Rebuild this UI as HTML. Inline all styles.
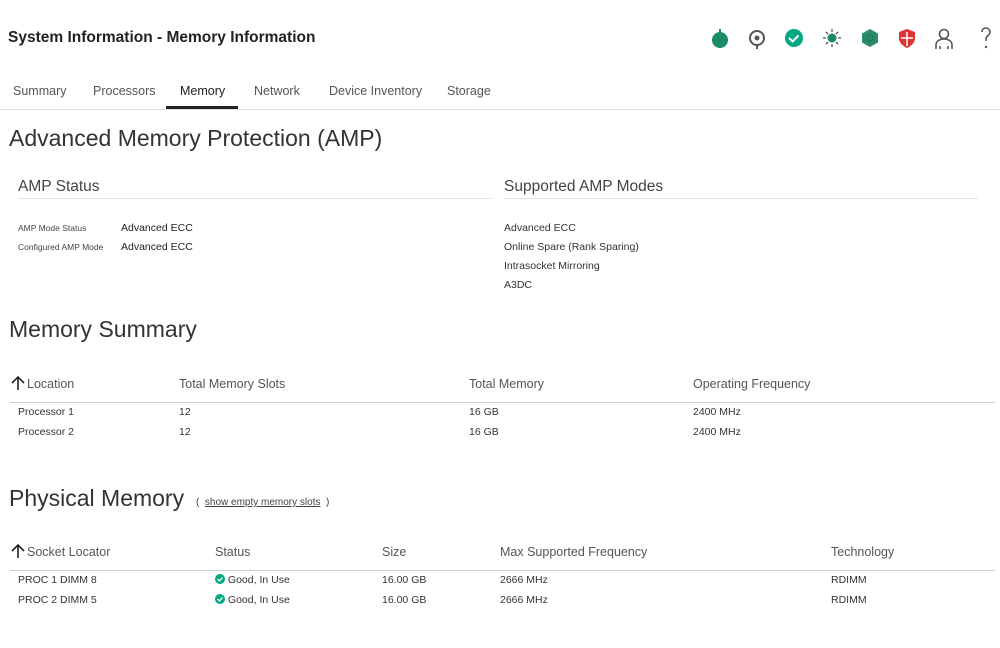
<!DOCTYPE html><html><head><style>
body{margin:0;width:1000px;height:648px;background:#fff;font-family:"Liberation Sans",sans-serif;color:#222;position:relative;overflow:hidden}
.a{position:absolute;white-space:nowrap}
.t{font-size:10.5px;color:#333}
.h{font-size:12.5px;color:#555}
.big{font-size:23px;color:#333}
.line{position:absolute;height:1px;background:#ccc}
</style></head><body>
<div class="a" style="left:8px;top:29px;font-size:15.5px;font-weight:bold;color:#222">System Information - Memory Information</div>
<svg class="a" style="left:708px;top:26px" width="290" height="26" viewBox="0 0 290 26">
<circle cx="12" cy="14" r="8" fill="#1a8a6a"/><rect x="11" y="3" width="2" height="8" fill="#1a8a6a"/>
<circle cx="49" cy="12" r="7" fill="none" stroke="#555" stroke-width="2"/><circle cx="49" cy="12" r="2.5" fill="#555"/><rect x="48" y="19" width="2" height="4" fill="#555"/>
<circle cx="86" cy="12" r="9" fill="#01a982"/><path d="M81 12l3.5 3.5 6-6" stroke="#fff" stroke-width="2" fill="none"/>
<circle cx="124" cy="12" r="4.5" fill="#1a8a6a"/><path d="M124 3v3M124 18v3M115 12h3M130 12h3M118 6l2 2M128 16l2 2M130 6l-2 2M118 18l2-2" stroke="#555" stroke-width="1.3"/>
<path d="M162 3l8 4.5v9l-8 4.5-8-4.5v-9z" fill="#2a8a6a"/><circle cx="162" cy="12" r="3" fill="none" stroke="#1a7a5a"/>
<path d="M199 3l8 3v6c0 5-4 8-8 10-4-2-8-5-8-10v-6z" fill="#d33"/><path d="M199 6v14M193 12h12" stroke="#fff" stroke-width="1.5"/>
<circle cx="236" cy="8" r="4.5" fill="none" stroke="#555" stroke-width="1.6"/><path d="M228 23v-4c0-4 4-6 8-6s8 2 8 6v4M232 23v-3M240 23v-3" fill="none" stroke="#555" stroke-width="1.6"/>
<path d="M274 6c0-3 2-4 4-4s4 1.5 4 4c0 3-4 4-4 7v2" fill="none" stroke="#555" stroke-width="1.6"/><circle cx="278" cy="21" r="1.2" fill="#555"/>
</svg>
<div class="a h" style="left:13px;top:84px">Summary</div>
<div class="a h" style="left:93px;top:84px">Processors</div>
<div class="a h" style="left:180px;top:84px;color:#222">Memory</div>
<div class="a h" style="left:254px;top:84px">Network</div>
<div class="a h" style="left:329px;top:84px">Device Inventory</div>
<div class="a h" style="left:447px;top:84px">Storage</div>
<div class="line" style="left:0;top:109px;width:1000px;background:#ddd"></div>
<div class="a" style="left:166px;top:106px;width:72px;height:3px;background:#222"></div>
<div class="a big" style="left:9px;top:125px">Advanced Memory Protection (AMP)</div>
<div class="a" style="left:18px;top:178px;font-size:15.5px;color:#444">AMP Status</div>
<div class="a" style="left:504px;top:178px;font-size:15.5px;color:#444">Supported AMP Modes</div>
<div class="line" style="left:18px;top:198px;width:474px;background:#e4e4e4"></div>
<div class="line" style="left:504px;top:198px;width:474px;background:#e4e4e4"></div>
<div class="a" style="left:18px;top:223px;font-size:8.5px;color:#444">AMP Mode Status</div>
<div class="a" style="left:18px;top:242px;font-size:8.5px;color:#444">Configured AMP Mode</div>
<div class="a t" style="left:121px;top:222px;color:#222">Advanced ECC</div>
<div class="a t" style="left:121px;top:241px;color:#222">Advanced ECC</div>
<div class="a t" style="left:504px;top:222px">Advanced ECC</div>
<div class="a t" style="left:504px;top:241px">Online Spare (Rank Sparing)</div>
<div class="a t" style="left:504px;top:260px">Intrasocket Mirroring</div>
<div class="a t" style="left:504px;top:279px">A3DC</div>
<div class="a big" style="left:9px;top:316px">Memory Summary</div>
<svg class="a" style="left:10px;top:375px" width="16" height="16"><path d="M8 15V2M2 8l6-6 6 6" stroke="#222" stroke-width="1.6" fill="none"/></svg>
<div class="a h" style="left:27px;top:377px">Location</div>
<div class="a h" style="left:179px;top:377px">Total Memory Slots</div>
<div class="a h" style="left:469px;top:377px">Total Memory</div>
<div class="a h" style="left:693px;top:377px">Operating Frequency</div>
<div class="line" style="left:10px;top:402px;width:985px"></div>
<div class="a t" style="left:18px;top:406px">Processor 1</div><div class="a t" style="left:179px;top:406px">12</div><div class="a t" style="left:469px;top:406px">16 GB</div><div class="a t" style="left:693px;top:406px">2400 MHz</div>
<div class="a t" style="left:18px;top:426px">Processor 2</div><div class="a t" style="left:179px;top:426px">12</div><div class="a t" style="left:469px;top:426px">16 GB</div><div class="a t" style="left:693px;top:426px">2400 MHz</div>
<div class="a big" style="left:9px;top:485px">Physical Memory</div>
<div class="a" style="left:196px;top:497px;font-size:10px;color:#444">( &nbsp;<u>show empty memory slots</u> &nbsp;)</div>
<svg class="a" style="left:10px;top:543px" width="16" height="16"><path d="M8 15V2M2 8l6-6 6 6" stroke="#222" stroke-width="1.6" fill="none"/></svg>
<div class="a h" style="left:27px;top:545px">Socket Locator</div>
<div class="a h" style="left:215px;top:545px">Status</div>
<div class="a h" style="left:382px;top:545px">Size</div>
<div class="a h" style="left:500px;top:545px">Max Supported Frequency</div>
<div class="a h" style="left:831px;top:545px">Technology</div>
<div class="line" style="left:10px;top:570px;width:985px"></div>
<div class="a t" style="left:18px;top:574px">PROC 1 DIMM 8</div><div class="a t" style="left:215px;top:574px"><svg width="10" height="10" style="vertical-align:-1px"><circle cx="5" cy="5" r="5" fill="#01a982"/><path d="M2.5 5l2 2 3-3.5" stroke="#fff" stroke-width="1.3" fill="none"/></svg> Good, In Use</div><div class="a t" style="left:382px;top:574px">16.00 GB</div><div class="a t" style="left:500px;top:574px">2666 MHz</div><div class="a t" style="left:831px;top:574px">RDIMM</div>
<div class="a t" style="left:18px;top:594px">PROC 2 DIMM 5</div><div class="a t" style="left:215px;top:594px"><svg width="10" height="10" style="vertical-align:-1px"><circle cx="5" cy="5" r="5" fill="#01a982"/><path d="M2.5 5l2 2 3-3.5" stroke="#fff" stroke-width="1.3" fill="none"/></svg> Good, In Use</div><div class="a t" style="left:382px;top:594px">16.00 GB</div><div class="a t" style="left:500px;top:594px">2666 MHz</div><div class="a t" style="left:831px;top:594px">RDIMM</div>
</body></html>
